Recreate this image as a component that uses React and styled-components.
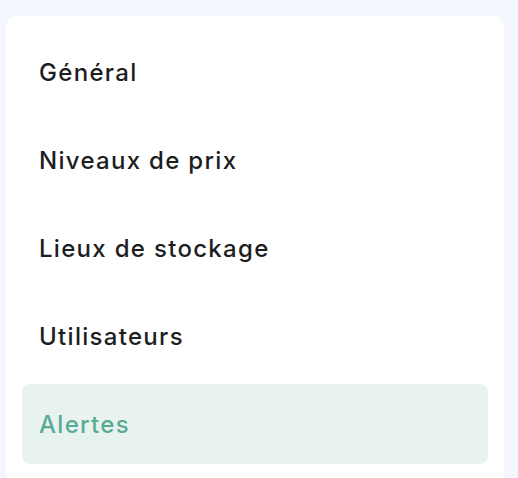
import React from 'react';
import styled, { createGlobalStyle } from 'styled-components';

const GlobalStyle = createGlobalStyle`
  html, body {
    margin: 0;
    padding: 0;
    background: #f3f6fd;
    font-family: Inter, "Liberation Sans", sans-serif;
  }
`;

const Page = styled.div`
  padding: 16px 14px 0 6px;
  height: 478px;
  box-sizing: border-box;
  overflow: hidden;
`;

const Card = styled.nav`
  background: #ffffff;
  border-radius: 10px;
  padding: 16px;
  display: flex;
  flex-direction: column;
  gap: 8px;
  min-height: 500px;
  box-sizing: border-box;
`;

const Item = styled.a`
  display: flex;
  align-items: center;
  height: 80px;
  padding: 0 17px;
  border-radius: 8px;
  font-size: 24px;
  font-weight: 500;
  letter-spacing: 1.3px;
  color: ${p => (p.$active ? '#5aab95' : '#1e1e1e')};
  background: ${p => (p.$active ? '#e8f3f0' : 'transparent')};
  cursor: pointer;
  text-decoration: none;
`;

const items = ['Général', 'Niveaux de prix', 'Lieux de stockage', 'Utilisateurs', 'Alertes'];

export default function App() {
  return (
    <>
      <GlobalStyle />
      <Page>
        <Card>
          {items.map((label) => (
            <Item key={label} $active={label === 'Alertes'}>
              {label}
            </Item>
          ))}
        </Card>
      </Page>
    </>
  );
}
